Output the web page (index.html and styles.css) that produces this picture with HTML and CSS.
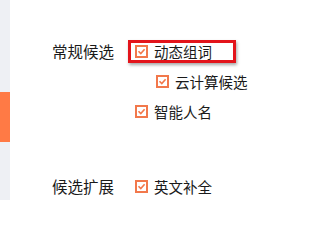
FILE: index.html
```html
<!DOCTYPE html>
<html>
<head>
<meta charset="utf-8">
<link rel="stylesheet" href="styles.css">
</head>
<body>
<div class="page">
  <div class="sidebar"><div class="sidebar-active"></div></div>
  <div class="content">
    <div class="section">
      <div class="label">常规候选</div>
      <div class="options">
        <div class="option highlight">
          <svg class="cb" width="13" height="13" viewBox="0 0 13 13"><rect x="1" y="1" width="11" height="11" fill="#fff" stroke="#f2784b" stroke-width="2"/><path d="M3.5 6.2 L5.8 8.6 L9.6 4.2" fill="none" stroke="#f2784b" stroke-width="1.6"/></svg>
          <span>动态组词</span>
        </div>
        <div class="option indent">
          <svg class="cb" width="13" height="13" viewBox="0 0 13 13"><rect x="1" y="1" width="11" height="11" fill="#fff" stroke="#f2784b" stroke-width="2"/><path d="M3.5 6.2 L5.8 8.6 L9.6 4.2" fill="none" stroke="#f2784b" stroke-width="1.6"/></svg>
          <span>云计算候选</span>
        </div>
        <div class="option">
          <svg class="cb" width="13" height="13" viewBox="0 0 13 13"><rect x="1" y="1" width="11" height="11" fill="#fff" stroke="#f2784b" stroke-width="2"/><path d="M3.5 6.2 L5.8 8.6 L9.6 4.2" fill="none" stroke="#f2784b" stroke-width="1.6"/></svg>
          <span>智能人名</span>
        </div>
      </div>
    </div>
    <div class="section second">
      <div class="label">候选扩展</div>
      <div class="options">
        <div class="option">
          <svg class="cb" width="13" height="13" viewBox="0 0 13 13"><rect x="1" y="1" width="11" height="11" fill="#fff" stroke="#f2784b" stroke-width="2"/><path d="M3.5 6.2 L5.8 8.6 L9.6 4.2" fill="none" stroke="#f2784b" stroke-width="1.6"/></svg>
          <span>英文补全</span>
        </div>
      </div>
    </div>
  </div>
</div>
</body>
</html>
```
FILE: styles.css
```css
html, body {
  margin: 0;
  padding: 0;
  background: #fff;
}
body {
  font-family: "Noto Sans CJK SC", "Noto Sans", sans-serif;
  color: #1a1a1a;
  width: 300px;
  height: 200px;
  overflow: hidden;
}
.page {
  display: flex;
  height: 200px;
}
.sidebar {
  width: 10px;
  background: #eef0f4;
  padding-top: 92px;
  box-sizing: border-box;
}
.sidebar-active {
  height: 50px;
  background: #ff7a45;
}
.content {
  flex: 1;
  padding-left: 42px;
  padding-top: 36px;
}
.section {
  display: flex;
}
.section.second {
  margin-top: 45px;
}
.label {
  width: 83px;
  height: 30px;
  line-height: 30px;
  font-size: 15.5px;
}
.options {
  display: flex;
  flex-direction: column;
}
.option {
  position: relative;
  height: 30px;
  display: flex;
  align-items: center;
  font-size: 14.5px;
}
.option .cb {
  margin-right: 6px;
  flex: none;
}
.option.indent {
  padding-left: 21px;
}
.option.highlight::after {
  content: "";
  position: absolute;
  left: -7px;
  top: 4px;
  width: 102px;
  height: 17px;
  border: 3px solid #e3141b;
  box-shadow: 1px 2px 3px rgba(0, 0, 0, 0.35);
}
```
